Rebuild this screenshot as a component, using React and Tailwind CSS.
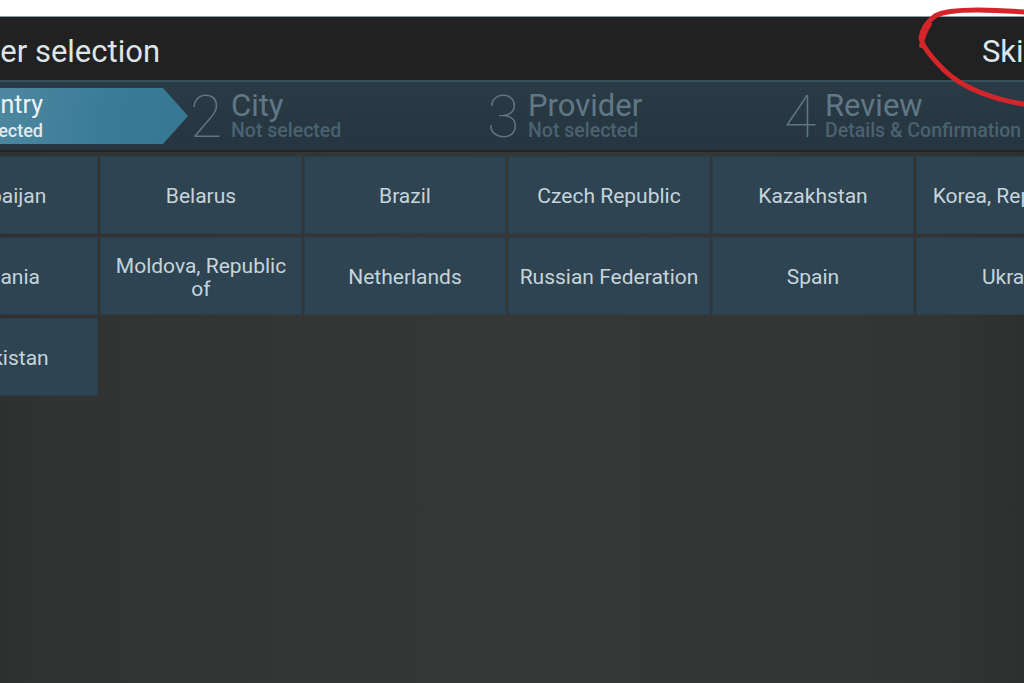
// Provider selection screen: header, 4-step wizard bar, country grid
const countries = [
  'Azerbaijan', 'Belarus', 'Brazil', 'Czech Republic', 'Kazakhstan', 'Korea, Republic of',
  'Lithuania', 'Moldova, Republic of', 'Netherlands', 'Russian Federation', 'Spain', 'Ukraine',
  'Uzbekistan',
]

const steps = [
  { n: 2, title: 'City', sub: 'Not selected' },
  { n: 3, title: 'Provider', sub: 'Not selected' },
  { n: 4, title: 'Review', sub: 'Details & Confirmation' },
]

function ActiveStep() {
  return (
    <div className="w-[296px] h-full flex shrink-0">
      <div className="w-[294px] h-full flex items-center justify-end pr-[145px] bg-[linear-gradient(100deg,#8aa6b3_0%,#5089a1_30%,#3a7c98_70%,#367794_100%)] [clip-path:polygon(0_0,calc(100%-25px)_0,100%_50%,calc(100%-25px)_100%,0_100%)]">
        <span className="text-[56px] font-light leading-none text-[#e6eef2] mr-2">1</span>
        <div className="flex flex-col items-end leading-none">
          <span className="text-[25px] text-[#eef4f6]">Country</span>
          <span className="text-[18px] font-medium text-[#e2ebef] mt-[5px]">Selected</span>
        </div>
      </div>
    </div>
  )
}

function Step({ n, title, sub }) {
  return (
    <div className="w-[297px] h-full flex items-center shrink-0">
      <span className="text-[59px] font-thin leading-none text-[#5d7584] w-[41px]">{n}</span>
      <div className="flex flex-col whitespace-nowrap">
        <span className="text-[31px] leading-[30px] text-[#607886]">{title}</span>
        <span className="text-[19.5px] leading-[20px] font-medium text-[#4a6270]">{sub}</span>
      </div>
    </div>
  )
}

export default function App() {
  return (
    <div className="relative w-[1024px] h-[683px] overflow-hidden bg-white font-['Roboto',sans-serif]">
      <div className="h-[17px] bg-white border-b border-[#8b9aa3]" />
      <div className="h-[666px] w-[1228px] -ml-[106px] flex flex-col bg-[linear-gradient(90deg,#272828_0%,#313333_12%,#363838_50%,#333535_85%,#282929_100%)]">
        {/* header */}
        <div className="h-[63px] shrink-0 bg-[#212121] flex items-center pt-[6px] pl-[19px] pr-[81px]">
          <span className="text-[31px] text-[#dde5e9] leading-none">Provider selection</span>
          <span className="ml-auto text-[31px] text-[#dde5e9] leading-none">Skip</span>
        </div>

        {/* wizard bar */}
        <div className="h-[72px] shrink-0 border-t-2 border-[#3a4f5c] border-b-2 border-b-[#1d2429] bg-[linear-gradient(180deg,#2a3b46,#26353f)] flex py-[6px]">
          <ActiveStep />
          {steps.map((s) => (
            <Step key={s.n} {...s} />
          ))}
        </div>

        {/* country grid */}
        <div className="grid grid-cols-[repeat(6,202px)] auto-rows-[78px] gap-x-[2px] gap-y-[3px] pl-[2px] pt-[4px]">
          {countries.map((c) => (
            <div
              key={c}
              className="bg-[#2e4452] flex items-center justify-center text-center px-1 pt-[3px] text-[21px] leading-[23px] text-[#c6d4db] shadow-[inset_0_0_0_1px_#2a3d49]"
            >
              {c}
            </div>
          ))}
        </div>
      </div>

      {/* red hand-drawn circle around Skip */}
      <svg className="absolute left-0 top-0 pointer-events-none" width="1024" height="683">
        <path
          d="M1024 104 C995 100 962 88 944 70 C930 56 922 46 921 38 C922 30 927 22 935 16 C948 8 985 9 1024 12"
          fill="none"
          stroke="#d4252b"
          strokeWidth="5"
          strokeLinecap="round"
        />
        <path d="M921 46 C923 38 926 30 930 24" fill="none" stroke="#d4252b" strokeWidth="4" strokeLinecap="round" />
      </svg>
    </div>
  )
}
